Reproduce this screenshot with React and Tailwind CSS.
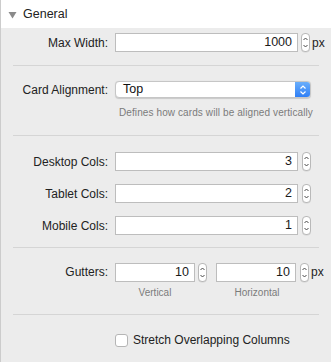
import React from "react";

const font = { fontFamily: '"Liberation Sans", Arial, sans-serif' };

function Stepper() {
  return (
    <div className="w-[9px] h-[19px] rounded-[4px] border border-[#b9b9b9] bg-white flex flex-col items-center justify-center shadow-[0_0.5px_0.5px_rgba(0,0,0,0.1)]">
      <svg width="7" height="15" viewBox="0 0 7 15">
        <path d="M1.5 5 L3.5 3 L5.5 5" fill="none" stroke="#4a4a4a" strokeWidth="1" />
        <path d="M1.5 10 L3.5 12 L5.5 10" fill="none" stroke="#4a4a4a" strokeWidth="1" />
      </svg>
    </div>
  );
}

function NumField({ value, w = "w-[183px]" }) {
  return (
    <div className={`${w} h-[19px] bg-white border border-[#bdbdbd] flex items-center justify-end pr-[5px] text-[12.5px] text-[#1a1a1a]`}>
      {value}
    </div>
  );
}

function Label({ children }) {
  return <div className="w-[107px] shrink-0 text-right text-[12px] text-[#222]">{children}</div>;
}

function Sep() {
  return <div className="ml-[12px] mr-[12px] h-px bg-[#d5d5d5]" />;
}

export default function App() {
  return (
    <div style={font} className="w-[331px] h-[362px] bg-[#ececec] border-l border-[#cccccc] overflow-hidden">
      <div className="h-[28px] bg-white flex items-center pl-[7px]">
        <svg width="9" height="8" viewBox="0 0 9 8" className="mr-[6px] mt-[1px]">
          <path d="M0.5 1 L8.5 1 L4.5 7.5 Z" fill="#8a8a8a" />
        </svg>
        <span className="text-[12.5px] text-[#222]">General</span>
      </div>

      <div className="flex items-center mt-[5px] h-[19px]">
        <Label>Max Width:</Label>
        <div className="ml-[7px]"><NumField value="1000" /></div>
        <div className="ml-[3px]"><Stepper /></div>
        <span className="ml-[2px] text-[12px] text-[#222]">px</span>
      </div>

      <div className="mt-[13px]"><Sep /></div>

      <div className="flex items-center mt-[15px] h-[17px]">
        <Label>Card Alignment:</Label>
        <div className="ml-[7px] w-[196px] h-[17px] rounded-[4px] bg-white border border-[#c6c6c6] shadow-[0_0.5px_1px_rgba(0,0,0,0.15)] flex items-stretch overflow-hidden">
          <div className="flex-1 flex items-center pl-[7px] text-[12.5px] text-[#111]">Top</div>
          <div className="w-[15px] bg-gradient-to-b from-[#6aaefb] to-[#2f7ff6] flex items-center justify-center">
            <svg width="8" height="12" viewBox="0 0 8 12">
              <path d="M1.5 4.5 L4 2 L6.5 4.5" fill="none" stroke="#fff" strokeWidth="1.2" />
              <path d="M1.5 7.5 L4 10 L6.5 7.5" fill="none" stroke="#fff" strokeWidth="1.2" />
            </svg>
          </div>
        </div>
      </div>
      <div className="ml-[118px] mt-[9px] text-[10px] text-[#7b7b7b] tracking-[0.1px] leading-[12px]">
        Defines how cards will be aligned vertically
      </div>

      <div className="mt-[16px]"><Sep /></div>

      <div className="flex flex-col gap-[13px] mt-[16px]">
        {[
          ["Desktop Cols:", "3"],
          ["Tablet Cols:", "2"],
          ["Mobile Cols:", "1"],
        ].map(([l, v]) => (
          <div key={l} className="flex items-center h-[19px]">
            <Label>{l}</Label>
            <div className="ml-[7px]"><NumField value={v} /></div>
            <div className="ml-[4px]"><Stepper /></div>
          </div>
        ))}
      </div>

      <div className="mt-[12px]"><Sep /></div>

      <div className="flex items-center mt-[14px] h-[20px]">
        <Label>Gutters:</Label>
        <div className="ml-[7px]"><NumField value="10" w="w-[80px]" /></div>
        <div className="ml-[3px]"><Stepper /></div>
        <div className="ml-[9px]"><NumField value="10" w="w-[80px]" /></div>
        <div className="ml-[4px]"><Stepper /></div>
        <span className="ml-[2px] text-[12px] text-[#222]">px</span>
      </div>
      <div className="flex mt-[5px] text-[10px] text-[#7b7b7b] leading-[12px]">
        <div className="ml-[114px] w-[80px] text-center">Vertical</div>
        <div className="ml-[22px] w-[80px] text-center">Horizontal</div>
      </div>

      <div className="mt-[15px]"><Sep /></div>

      <div className="flex items-center mt-[16px] ml-[114px]">
        <div className="w-[13px] h-[13px] rounded-[3px] bg-white border border-[#b5b5b5]" />
        <span className="ml-[5px] text-[12px] text-[#222]">Stretch Overlapping Columns</span>
      </div>
    </div>
  );
}
